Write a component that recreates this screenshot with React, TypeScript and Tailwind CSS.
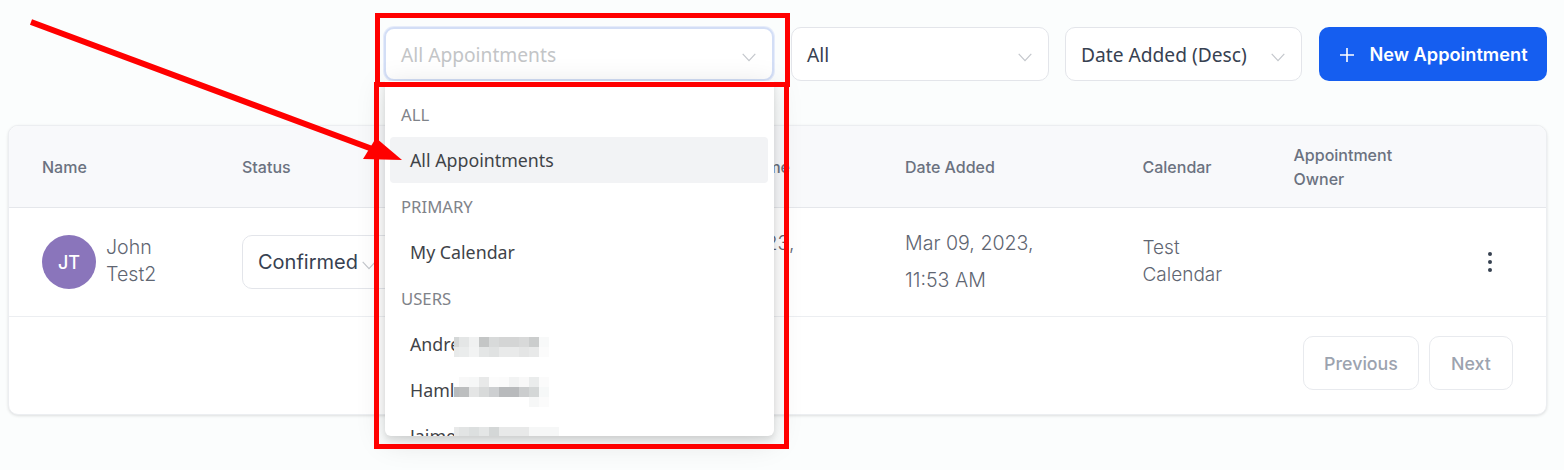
const chevron = (
  <svg className="mt-[6px] shrink-0" width="14" height="9" viewBox="0 0 14 9" fill="none" stroke="#c4c7cc" strokeWidth="1.2">
    <path d="M.7.9 7 7.6 13.3.9" />
  </svg>
)

const blurredNames = [
  {
    name: 'Andre',
    top: 'top-[16px]',
    rows: [
      ['#d4d7d7', '#e4e6e6', '#f0f1f1', '#c4c6c6', '#d8dada', '#d4d5d5', '#d4d5d5', '#d8d9d9', '#cbcdcd', '#f8f9f9'],
      ['#e8eaea', '#eaecec', '#f2f3f3', '#e4e6e6', '#e0e2e2', '#e9eaea', '#e9eaea', '#e4e5e5', '#e8e9e9', '#fbfbfb'],
    ],
  },
  {
    name: 'Haml',
    top: 'top-[10px]',
    rows: [
      ['#ffffff', '#f8f8f8', '#f6f7f7', '#e8e9e9', '#fcfcfc', '#fbfbfb', '#f2f3f3', '#f8f8f8', '#eaecec', '#fbfbfb'],
      ['#b8bbbd', '#bcbebf', '#e4e5e5', '#d8dada', '#cdcfd1', '#b8babc', '#b8babc', '#cbcdce', '#d4d7d7', '#f6f8f8'],
      ['#ffffff', '#ffffff', '#ffffff', '#ffffff', '#ffffff', '#ffffff', '#ffffff', '#ffffff', '#f6f7f7', '#fbfbfb'],
    ],
  },
  {
    name: 'Jaime',
    top: 'top-[14px]',
    rows: [
      ['#e8e9e9', '#e2e4e4', '#dcdfdf', '#e4e6e6', '#d4d7d7', '#e8e9e9', '#e8e9e9', '#e8e9e9', '#f6f7f7', '#f6f7f7', '#f6f7f7'],
    ],
  },
]

const columns = 'grid-cols-[200px_424px_239px_237.5px_196px_1fr]'

function Select({ label, width, focused }: { label: string; width: string; focused?: boolean }) {
  return (
    <div
      className={`flex h-[54px] items-center justify-between rounded-[10px] bg-white pl-[15px] pr-[16px] font-['Noto_Sans',sans-serif] text-[19.2px] ${width} ${
        focused
          ? 'border-2 border-[#d3def6] text-[#c3c5c7] ring-1 ring-[#e6ecfa]'
          : 'border border-[#e3e5ea] text-[#374151]'
      }`}
    >
      <span className="mt-[2px]">{label}</span>
      {chevron}
    </div>
  )
}

function OptionsMenu() {
  return (
    <div className="absolute left-px top-[54px] z-10 h-[355px] w-[389px] overflow-hidden rounded-b-[6px] bg-white pl-[5px] pr-[6px] pt-[10px] font-['Noto_Sans',sans-serif] shadow-[0_5px_30px_rgba(0,0,0,0.13),0_4px_6px_rgba(0,0,0,0.1)]">
      <p className="flex h-[46px] items-center pl-[11px] pt-px text-[16.7px] text-[#7f8389]">ALL</p>
      <p className="flex h-[46px] items-center rounded bg-[#f2f3f5] pl-[20px] text-[17.8px] text-[#3f4348]">All Appointments</p>
      <p className="flex h-[46px] items-center pl-[11px] pt-px text-[16.7px] text-[#7f8389]">PRIMARY</p>
      <p className="flex h-[46px] items-center pl-[20px] text-[17.8px] text-[#3f4348]">My Calendar</p>
      <p className="flex h-[46px] items-center pl-[11px] pt-px text-[16.7px] text-[#7f8389]">USERS</p>
      {blurredNames.map((item) => (
        <div key={item.name} className="relative flex h-[46px] items-center pl-[20px] text-[17.8px] text-[#3f4348]">
          <span>{item.name}</span>
          <div className={`absolute left-[64px] flex flex-col ${item.top}`}>
            {item.rows.map((row, i) => (
              <div key={i} className="flex">
                {row.map((color, j) => (
                  <span key={j} className="h-[10px] w-[10px] first:w-[5px]" style={{ backgroundColor: color }} />
                ))}
              </div>
            ))}
          </div>
        </div>
      ))}
    </div>
  )
}

export default function App() {
  return (
    <div className="relative h-[470px] w-[1564px] overflow-hidden bg-[#fbfdfd] font-['Inter',sans-serif]">
      <div className="flex items-start justify-end gap-4 pr-[17px] pt-[27px]">
        <div className="relative mr-px">
          <Select label="All Appointments" width="w-[390px]" focused />
          <OptionsMenu />
        </div>
        <Select label="All" width="w-[258px]" />
        <div className="mr-px">
          <Select label="Date Added (Desc)" width="w-[237px]" />
        </div>
        <button className="flex h-[54px] w-[228px] items-center justify-center gap-[14px] rounded-[10px] bg-[#155ef0] pl-px pt-px text-[18.2px] font-semibold text-white">
          <svg width="16" height="16" viewBox="0 0 16 16" stroke="white" strokeWidth="1.6">
            <path d="M8 1v14M1 8h14" />
          </svg>
          New Appointment
        </button>
      </div>

      <div className="ml-[8px] mt-[44px] w-[1539px] overflow-hidden rounded-[10px] border border-[#eceef1] bg-white shadow-[0_1px_3px_rgba(0,0,0,0.12)]">
        <div className={`grid h-[82px] items-center border-b border-[#e5e7eb] bg-[#f8f9fb] pl-[33px] text-[16px] font-medium text-[#6b7280] ${columns}`}>
          <span>Name</span>
          <span>Status</span>
          <span>Requested Time</span>
          <span>Date Added</span>
          <span>Calendar</span>
          <span className="-ml-[45px] w-[120px] leading-[24px]">Appointment Owner</span>
        </div>
        <div className={`grid h-[109px] items-center border-b border-[#eceef1] pl-[33px] text-[19px] font-light text-[#5f6672] ${columns}`}>
          <div className="flex items-center gap-[11px]">
            <span className="flex h-[54px] w-[54px] items-center justify-center rounded-full bg-[#8a75bb] text-[18px] font-medium text-white">JT</span>
            <span className="-ml-px -mt-[2px] w-[60px] text-[19.6px] leading-[27px]">John Test2</span>
          </div>
          <div className="flex h-[54px] w-[190px] items-center gap-1 rounded-[10px] border border-[#e3e5ea] pl-[15px] text-[20px] font-normal text-[#374151]">
            Confirmed {chevron}
          </div>
          <span className="w-[140px] text-[19.6px] leading-[37px]">Mar 09, 2023, 11:53 AM</span>
          <span className="w-[140px] text-[19.6px] leading-[37px]">Mar 09, 2023, 11:53 AM</span>
          <span className="-mt-[2px] w-[100px] leading-[27px]">Test Calendar</span>
          <div className="flex justify-end pr-[53px]">
            <svg width="6" height="22" viewBox="0 0 6 22" fill="#374151">
              <circle cx="3" cy="3" r="2" />
              <circle cx="3" cy="11" r="2" />
              <circle cx="3" cy="19" r="2" />
            </svg>
          </div>
        </div>
        <div className="flex h-[97px] items-center justify-end gap-[10px] pb-[6px] pr-[33px] text-[17.8px] font-medium text-[#9ca3af]">
          <button className="h-[54px] w-[116px] rounded-[10px] border border-[#e8eaee] pt-[3px]">Previous</button>
          <button className="h-[54px] w-[84px] rounded-[10px] border border-[#e8eaee] pt-[3px]">Next</button>
        </div>
      </div>

      {/* annotation boxes and arrow drawn over the screenshot */}
      <div className="absolute left-[375px] top-[13px] z-20 h-[74px] w-[415px] border-[5px] border-[#ff0000]" />
      <div className="absolute left-[374px] top-[82px] z-20 h-[367px] w-[415px] border-[5px] border-[#ff0000]" />
      <svg className="absolute left-0 top-0 z-30" width="420" height="180" viewBox="0 0 420 180" fill="#ff0000">
        <path d="M31 22 375 150" stroke="#ff0000" strokeWidth="6" />
        <path d="M402 160 363 159 376 138Z" />
      </svg>
    </div>
  )
}
